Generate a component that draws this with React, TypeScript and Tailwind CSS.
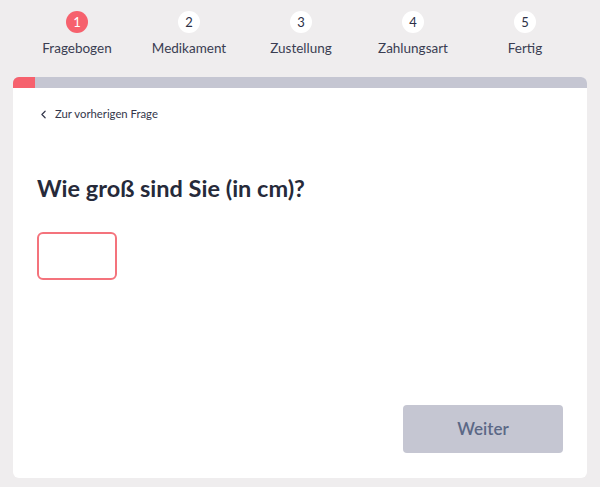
import { ChevronLeft } from 'lucide-react';

const steps = ['Fragebogen', 'Medikament', 'Zustellung', 'Zahlungsart', 'Fertig'];

const Step = ({ index, label, active }: { index: number; label: string; active: boolean }) => (
  <div className="flex flex-col items-center">
    <div
      className={
        active
          ? 'flex h-[22px] w-[22px] items-center justify-center rounded-full bg-[#f6616d] text-[13px] leading-none text-white'
          : 'flex h-[22px] w-[22px] items-center justify-center rounded-full bg-white text-[13px] leading-none text-[#2c3046]'
      }
    >
      {index}
    </div>
    <span className="mt-[6px] text-[13.5px] leading-[18px] text-[#3a3d52]">{label}</span>
  </div>
);

export default function App() {
  return (
    <div
      className="h-[487px] w-[600px] overflow-hidden bg-[#efedee]"
      style={{ fontFamily: 'Lato, "Noto Sans", sans-serif' }}
    >
      <div className="grid grid-cols-5 pl-[21px] pr-[19px] pt-[11px]">
        {steps.map((s, i) => (
          <Step key={s} index={i + 1} label={s} active={i === 0} />
        ))}
      </div>

      <div className="mx-[13px] mt-[20px] h-[401px] overflow-hidden rounded-md bg-white">
        <div className="flex h-[11px] bg-[#c5c6d2]">
          <div className="w-[22px] bg-[#f6616d]" />
        </div>
        <div className="flex h-[390px] flex-col px-[24px]">
          <button className="mt-[18px] flex items-center gap-[5px] text-[11.3px] text-[#34374c]">
            <ChevronLeft size={13} strokeWidth={2.2} />
            Zur vorherigen Frage
          </button>
          <h1 className="mt-[51px] text-[23.5px] font-bold leading-[28px] text-[#262a3a]">
            Wie groß sind Sie (in cm)?
          </h1>
          <input
            type="text"
            className="mt-[30px] h-[48px] w-[80px] rounded-md border-2 border-[#f4737c] outline-none"
          />
          <div className="mt-auto mb-[25px] flex justify-end">
            <button className="h-[48px] w-[160px] rounded-[4px] bg-[#c5c6d2] text-[17px] font-semibold text-[#5b6886]">
              Weiter
            </button>
          </div>
        </div>
      </div>
    </div>
  );
}
